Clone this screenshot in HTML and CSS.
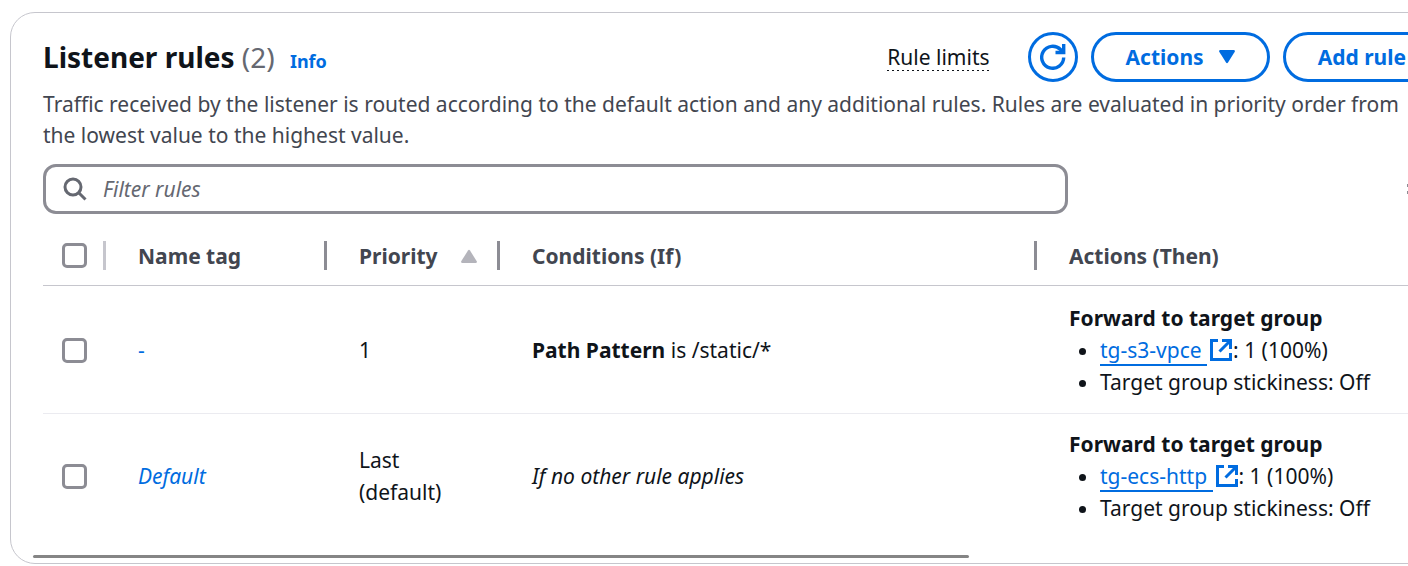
FILE: index.html
```html
<!DOCTYPE html>
<html lang="en">
<head>
    <meta charset="UTF-8">
    <meta name="viewport" content="width=device-width, initial-scale=1.0">
    <title>Listener rules</title>
    <link rel="stylesheet" href="styles.css">
</head>
<body>
    <section class="card">
        <div class="header">
            <h2>Listener rules <span class="counter">(2)</span> <a class="info" href="#">Info</a></h2>
            <div class="header-actions">
                <a class="limits" href="#">Rule limits</a>
                <button class="btn btn-icon" type="button" aria-label="Refresh">
                    <svg width="26" height="26" viewBox="0 0 26 26" fill="none" stroke="currentColor" stroke-width="3.400">
                        <path d="M23.700 13.500A11 11 0 1 1 20.500 5.500l2.500 2.500"/>
                        <path d="M23.700 0v8.500H15.500"/>
                    </svg>
                </button>
                <button class="btn" type="button">Actions
                    <svg width="16" height="14" viewBox="0 0 16 14" fill="currentColor">
                        <path d="M1 0h14q1.500.5.6 2L9 12.500q-1 1.300-2 0L.4 2Q-.5.500 1 0z"/>
                    </svg>
                </button>
                <button class="btn" type="button">Add rule</button>
            </div>
        </div>
        <p class="description">Traffic received by the listener is routed according to the default action and any additional rules. Rules are evaluated in priority order from the lowest value to the highest value.</p>

        <div class="toolbar">
            <label class="search">
                <svg width="24" height="24" viewBox="0 0 24 24" fill="none" stroke="currentColor" stroke-width="3">
                    <circle cx="10" cy="10" r="8"/>
                    <path d="M15.500 15.500l7 7"/>
                </svg>
                <input type="text" placeholder="Filter rules" aria-label="Filter rules">
            </label>
            <button class="pager" type="button" aria-label="Table options">
                <svg width="12" height="20" viewBox="0 0 12 20" fill="none" stroke="currentColor" stroke-width="3">
                    <path d="M0 6.500h12M0 13.500h12"/>
                </svg>
            </button>
        </div>

        <table class="rules">
            <colgroup>
                <col class="col-select">
                <col class="col-name">
                <col class="col-priority">
                <col class="col-conditions">
                <col>
            </colgroup>
            <thead>
                <tr>
                    <th><div class="head-cell head-select"><input type="checkbox" aria-label="Select all rules"></div></th>
                    <th><div class="head-cell">Name tag</div></th>
                    <th>
                        <div class="head-cell">Priority
                            <svg class="sort" width="16" height="14" viewBox="0 0 16 14" fill="currentColor">
                                <path d="M1 14h14q1.500-.5.6-2L9 1.500q-1-1.300-2 0L.4 12Q-.5 13.500 1 14z"/>
                            </svg>
                        </div>
                    </th>
                    <th><div class="head-cell">Conditions (If)</div></th>
                    <th><div class="head-cell head-last">Actions (Then)</div></th>
                </tr>
            </thead>
            <tbody>
                <tr>
                    <td class="select"><input type="checkbox" aria-label="Select rule 1"></td>
                    <td><a href="#">-</a></td>
                    <td>1</td>
                    <td><b>Path Pattern</b> is /static/*</td>
                    <td>
                        <b>Forward to target group</b>
                        <ul>
                            <li><a class="external" href="#"><span>tg-s3-vpce </span><svg width="24" height="24" viewBox="0 0 24 24" fill="none" stroke="currentColor" stroke-width="3"><path d="M9 2.500H2.500v19h19V15M13 2.500h8.500V11M21 3L10.500 13.500"/></svg></a>: 1 (100%)</li>
                            <li>Target group stickiness: Off</li>
                        </ul>
                    </td>
                </tr>
                <tr>
                    <td class="select"><input type="checkbox" aria-label="Select default rule"></td>
                    <td><a href="#"><i>Default</i></a></td>
                    <td>Last (default)</td>
                    <td><i>If no other rule applies</i></td>
                    <td>
                        <b>Forward to target group</b>
                        <ul>
                            <li><a class="external" href="#"><span>tg-ecs-http </span><svg width="24" height="24" viewBox="0 0 24 24" fill="none" stroke="currentColor" stroke-width="3"><path d="M9 2.500H2.500v19h19V15M13 2.500h8.500V11M21 3L10.500 13.500"/></svg></a>: 1 (100%)</li>
                            <li>Target group stickiness: Off</li>
                        </ul>
                    </td>
                </tr>
            </tbody>
        </table>
        <div class="scrollbar"><div class="scrollbar-thumb"></div></div>
    </section>
</body>
</html>
```
FILE: styles.css
```css
* {
    box-sizing: border-box;
}
body {
    margin: 0;
    overflow: hidden;
    font-family: "Amazon Ember", "Noto Sans", sans-serif;
    font-size: 21px;
    line-height: 32px;
    color: #0f141a;
    background-color: #fff;
}
a {
    color: #006ce0;
    text-decoration: none;
}
svg {
    flex: none;
}
/* the card is wider than the window and runs off its right side */
.card {
    margin: 12px -66px 0 10px;
    padding: 19px 32px 5px;
    border: 1px solid #c6c6cd;
    border-radius: 25px;
}
.header {
    display: flex;
    justify-content: space-between;
    align-items: center;
}
h2 {
    margin: 0;
    padding-top: 4px;
    font-size: 28px;
    line-height: 38px;
}
.counter {
    font-weight: normal;
    color: #656871;
}
.info {
    margin-left: 8px;
    font-size: 18px;
}
.header-actions {
    display: flex;
    align-items: center;
    gap: 13px;
}
.limits {
    margin-right: 25px;
    padding-bottom: 1px;
    line-height: 26px;
    color: #0f141a;
    background: repeating-linear-gradient(to right, #0f141a 0 2px, transparent 2px 5px) left bottom / 100% 1px no-repeat;
}
.btn {
    display: flex;
    align-items: center;
    gap: 15px;
    height: 50px;
    padding: 0 32px;
    border: 3px solid #006ce0;
    border-radius: 25px;
    background: #fff;
    color: #006ce0;
    font: inherit;
    font-weight: bold;
    white-space: nowrap;
}
.btn-icon {
    width: 50px;
    padding: 0;
    justify-content: center;
}
.description {
    margin: 7px 0 13px;
    padding-right: 32px;
    line-height: 31px;
    color: #424650;
}
.toolbar {
    display: grid;
    grid-template-columns: 11fr 4fr;
    align-items: center;
}
.search {
    display: flex;
    align-items: center;
    gap: 16px;
    height: 50px;
    padding: 0 17px;
    border: 3px solid #8c8c94;
    border-radius: 13px;
    color: #656871;
}
.search input {
    flex: 1;
    padding: 0;
    border: 0;
    outline: none;
    background: none;
    font: inherit;
    color: #0f141a;
}
.search input::placeholder {
    font-style: italic;
    color: #656871;
}
.pager {
    justify-self: end;
    padding: 0 22px 0 0;
    border: 0;
    background: none;
    color: #8c8c94;
    line-height: 0;
}
.rules {
    width: 100%;
    margin-top: 27px;
    table-layout: fixed;
    border-collapse: collapse;
}
.col-select {
    width: 63px;
}
.col-name {
    width: 221px;
}
.col-priority {
    width: 173px;
}
.col-conditions {
    width: 537px;
}
th {
    padding: 0 0 15px;
    border-bottom: 1px solid #c6c6cd;
    text-align: left;
    color: #424650;
}
.head-cell {
    display: flex;
    align-items: center;
    justify-content: space-between;
    height: 29px;
    padding: 0 20px 0 32px;
    border-right: 3px solid #8c8c94;
}
.head-select {
    padding: 0 0 0 19px;
    border-color: #c6c6cd;
}
.head-last {
    border: 0;
}
.sort {
    color: #b4b4bb;
}
td {
    padding: 14px 32px 15px;
    border-bottom: 1px solid #ebebf0;
}
tbody tr:first-child td {
    padding-top: 16px;
}
tbody tr:last-child td {
    border-bottom: 0;
}
td.select {
    padding-left: 19px;
    padding-right: 0;
}
input[type="checkbox"] {
    display: block;
    appearance: none;
    width: 25px;
    height: 25px;
    margin: 0;
    border: 3px solid #8c8c94;
    border-radius: 5px;
    background: #fff;
}
ul {
    margin: 0;
    padding-left: 31px;
}
.external {
    white-space: pre;
}
.external span {
    border-bottom: 2px solid #006ce0;
}
.external svg {
    margin-left: 2px;
    vertical-align: -4px;
}
.scrollbar {
    margin: 16px -10px 0;
}
.scrollbar-thumb {
    width: 66%;
    height: 3px;
    border-radius: 2px;
    background-color: #858585;
}
```
